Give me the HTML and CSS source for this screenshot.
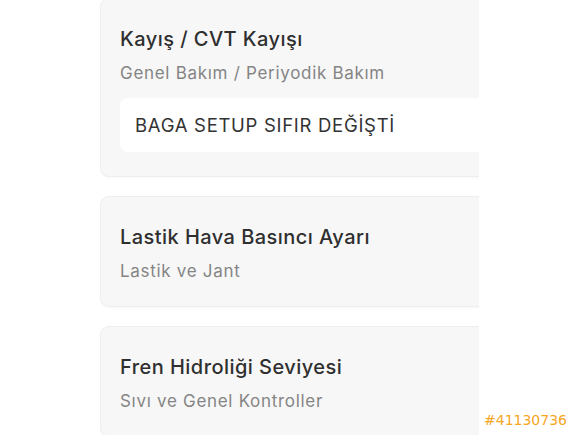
FILE: index.html
```html
<!DOCTYPE html>
<html lang="tr">

<head>
	<meta charset="UTF-8">
	<title>Bakım Listesi</title>
	<link rel="stylesheet" href="styles.css">
</head>

<body>
	<div class="page">
		<div class="list">
			<div class="card">
				<h3 class="title">Kayış / CVT Kayışı</h3>
				<p class="sub">Genel Bakım / Periyodik Bakım</p>
				<div class="note">BAGA SETUP SIFIR DEĞİŞTİ</div>
			</div>
			<div class="card">
				<h3 class="title">Lastik Hava Basıncı Ayarı</h3>
				<p class="sub">Lastik ve Jant</p>
			</div>
			<div class="card">
				<h3 class="title">Fren Hidroliği Seviyesi</h3>
				<p class="sub">Sıvı ve Genel Kontroller</p>
			</div>
		</div>
		<div class="tag">#41130736</div>
	</div>
</body>

</html>
```

FILE: styles.css
```css
body,
h3,
p,
div {
	margin: 0;
	padding: 0;
}

body {
	background: #fff;
	font-family: Inter, "Noto Sans", sans-serif;
	color: #333;
}

.page {
	display: flex;
	height: 435px;
	overflow: hidden;
}

.list {
	width: 379px;
	margin-left: 100px;
	margin-top: -2px;
	overflow: hidden;
	display: flex;
	flex-direction: column;
	gap: 19px;
}

.card {
	width: 420px;
	background: #f7f7f7;
	border: 1px solid #eeeeee;
	border-radius: 9px;
	padding: 28px 0 24px 19px;
	box-shadow: 0 1px 2px rgba(0, 0, 0, 0.03);
	flex-shrink: 0;
}

.title {
	font-size: 20px;
	line-height: 24px;
	font-weight: 500;
	letter-spacing: 0.45px;
	color: #2f2f2f;
}

.sub {
	margin-top: 11px;
	font-size: 17px;
	line-height: 22px;
	letter-spacing: 0.7px;
	color: #858585;
}

.note {
	margin-top: 14px;
	background: #fff;
	border-radius: 8px;
	padding: 0 15px;
	height: 54px;
	line-height: 54px;
	font-size: 18.5px;
	letter-spacing: 0.7px;
	color: #333;
}

.tag {
	align-self: flex-end;
	margin: 0 0 7px 5px;
	font-family: "DejaVu Sans", sans-serif;
	font-size: 14px;
	color: #f5a623;
}
```
